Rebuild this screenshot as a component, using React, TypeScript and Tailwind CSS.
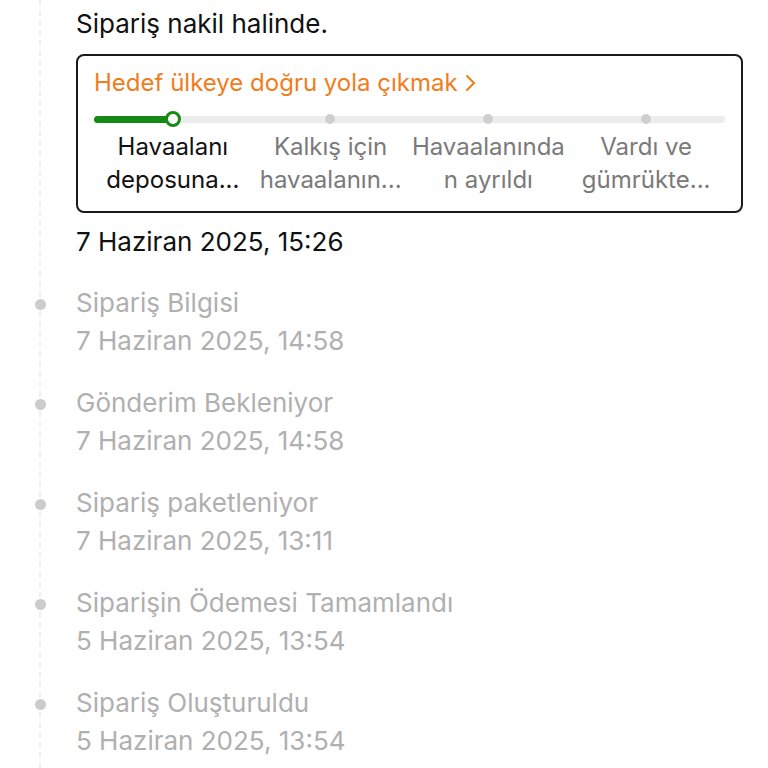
const steps = [
    { lines: ["Havaalanı", "deposuna..."], active: true },
    { lines: ["Kalkış için", "havaalanın..."], active: false },
    { lines: ["Havaalanında", "n ayrıldı"], active: false },
    { lines: ["Vardı ve", "gümrükte..."], active: false },
];

const history = [
    { title: "Sipariş Bilgisi", date: "7 Haziran 2025, 14:58" },
    { title: "Gönderim Bekleniyor", date: "7 Haziran 2025, 14:58" },
    { title: "Sipariş paketleniyor", date: "7 Haziran 2025, 13:11" },
    { title: "Siparişin Ödemesi Tamamlandı", date: "5 Haziran 2025, 13:54" },
    { title: "Sipariş Oluşturuldu", date: "5 Haziran 2025, 13:54" },
];

const Chevron = () => (
    <svg width="12" height="18" viewBox="0 0 12 18" className="ml-[6px]">
        <path d="M3 2 L10 9 L3 16" fill="none" stroke="#f07d1c" strokeWidth="2" strokeLinecap="round" strokeLinejoin="round" />
    </svg>
);

export default function App() {
    return (
        <div className="relative w-[768px] h-[768px] bg-white overflow-hidden font-['Inter','Liberation_Sans',sans-serif]">
            {/* dashed timeline */}
            <div className="absolute left-[39px] top-0 bottom-0 border-l-2 border-dashed border-[#f0f0f0]" />

            <div className="relative flex">
                <div className="w-[76px] shrink-0" />
                <div className="flex-1 pr-[25px]">
                    <div className="pt-[9px] text-[26px] leading-[30px] text-[#111]">Sipariş nakil halinde.</div>

                    {/* current stage card */}
                    <div className="mt-[15px] border-2 border-[#1a1a1a] rounded-[8px] px-[16px] pt-[12px] pb-[15px]">
                        <div className="flex items-center text-[24px] leading-[30px] text-[#f07d1c]">
                            Hedef ülkeye doğru yola çıkmak
                            <Chevron />
                        </div>

                        <div className="relative mt-[14px] h-[14px] flex items-center">
                            <div className="w-full h-[7px] rounded-full bg-[#ececec]" />
                            <div className="absolute left-0 w-[79px] h-[7px] rounded-l-full bg-[#168a16]" />
                            <div className="absolute left-[71px] w-[16px] h-[16px] rounded-full border-[3px] border-[#168a16] bg-white" />
                            <div className="absolute left-[231px] w-[10px] h-[10px] rounded-full bg-[#cfcfcf]" />
                            <div className="absolute left-[389px] w-[10px] h-[10px] rounded-full bg-[#cfcfcf]" />
                            <div className="absolute left-[547px] w-[10px] h-[10px] rounded-full bg-[#cfcfcf]" />
                        </div>

                        <div className="mt-[4px] grid grid-cols-4">
                            {steps.map((s, i) => (
                                <div
                                    key={i}
                                    className={`text-center text-[24px] leading-[33px] ${s.active ? "text-[#111]" : "text-[#7a7a7a]"}`}
                                >
                                    {s.lines.map((l) => (
                                        <div key={l} className="whitespace-nowrap">{l}</div>
                                    ))}
                                </div>
                            ))}
                        </div>
                    </div>

                    <div className="mt-[14px] text-[26px] leading-[30px] text-[#111]">7 Haziran 2025, 15:26</div>
                </div>
            </div>

            {/* past events */}
            <div className="relative mt-[27px] flex flex-col gap-[24px]">
                {history.map((h) => (
                    <div key={h.title} className="flex">
                        <div className="w-[76px] shrink-0 h-[40px] flex items-center">
                            <div className="ml-[35px] w-[11px] h-[11px] rounded-full bg-[#cccccc]" />
                        </div>
                        <div className="flex-1 text-[26px] leading-[38px] text-[#b0b0b0]">
                            <div>{h.title}</div>
                            <div>{h.date}</div>
                        </div>
                    </div>
                ))}
            </div>
        </div>
    );
}
